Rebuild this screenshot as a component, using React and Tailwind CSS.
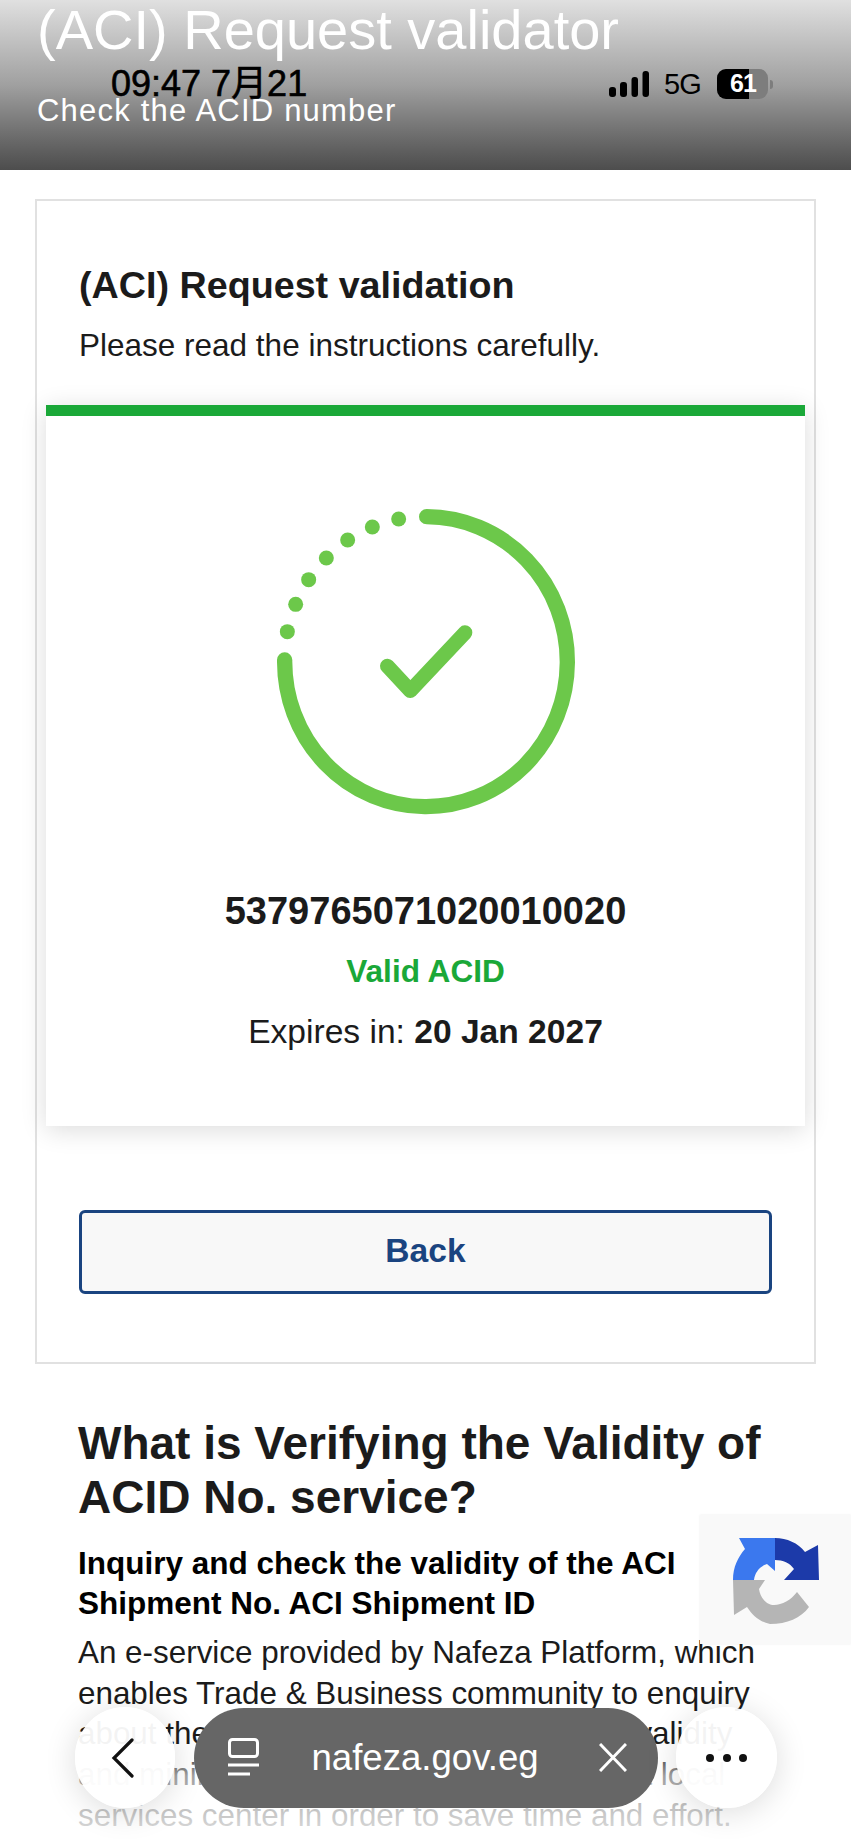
import React from "react";

const sans = { fontFamily: '"Liberation Sans", Arial, sans-serif' };

const dots = [
  [476, 117],
  [397, 141],
  [323, 180],
  [259, 234],
  [206, 299],
  [167, 373],
  [142, 455],
];

const SuccessRing = () => (
  <svg width="360" height="360" viewBox="0 0 1080 1080" fill="none" className="block">
    <path
      d="M560 110A424 435 0 1 1 134 540"
      stroke="#6cc84a"
      strokeWidth="46"
      strokeLinecap="round"
    />
    {dots.map(([cx, cy]) => (
      <circle key={cx} cx={cx} cy={cy} r="22.5" fill="#6cc84a" />
    ))}
    <path
      d="M442 558L511 632L675 458"
      stroke="#6cc84a"
      strokeWidth="44"
      strokeLinecap="round"
      strokeLinejoin="round"
    />
  </svg>
);

const RecaptchaLogo = () => (
  <svg width="86" height="87" viewBox="0 0 86 87" className="block">
    <path d="M0 43C0 30 5 20 12 12L6 1H42V34L34 27C27 29 22 35 21 43Z" fill="#3b78ee" />
    <path d="M42 1C54 1 65 6 72 15L85 8L86 43H51L61 32C57 26 50 23 42 23Z" fill="#1c3aa9" />
    <path d="M0 43H32L26 52C27 60 33 68 41 68C49 68 58 63 64 55L76 70C68 81 54 87 37 87C27 85 20 79 14 70L1 78Z" fill="#b5b5b5" />
  </svg>
);

const App = () => {
  return (
    <div style={sans} className="relative w-[851px] h-[1848px] overflow-hidden bg-white text-[#1b1b1b]">
      <header className="h-[170px] bg-gradient-to-b from-[#e0e0e0] via-[#a0a0a0] to-[#4d4d4d] pl-[37px] text-white">
        <h1 className="text-[56px] leading-[60px] whitespace-nowrap">(ACI) Request validator</h1>
        <p className="mt-[33px] text-[31px] leading-[36px] tracking-[1.2px] whitespace-nowrap">Check the ACID number</p>
      </header>

      <div className="absolute top-[62px] left-[111px] w-[662px] flex items-center text-black">
        <span
          className="text-[36px] leading-[44px] whitespace-nowrap [-webkit-text-stroke:0.6px_black]"
          style={{ fontFamily: '"Liberation Sans", "Noto Sans CJK SC", sans-serif' }}
        >
          09:47 7月21
        </span>
        <div className="ml-auto flex items-center">
          <svg width="40" height="44" viewBox="0 0 40 44" className="block">
            <rect x="0" y="25" width="7" height="10" rx="3" fill="#000" />
            <rect x="11" y="20" width="7" height="15" rx="3" fill="#000" />
            <rect x="22.5" y="15" width="6.5" height="20" rx="3" fill="#000" />
            <rect x="33.5" y="9" width="6.5" height="26" rx="3" fill="#000" />
          </svg>
          <span className="ml-[15px] w-[38px] text-[29px] leading-[44px] tracking-[-1px] whitespace-nowrap">5G</span>
          <div className="ml-[15px] relative w-[51px] h-[30px] rounded-[9px] bg-[#7d7d7d] overflow-hidden">
            <div className="w-[32px] h-full bg-black" />
            <span className="absolute left-[13px] top-0 h-full flex items-center text-[25px] font-bold tracking-[-1px] text-white">61</span>
          </div>
          <div className="ml-[2px] w-[3px] h-[9px] rounded-r-full bg-[#7d7d7d]" />
        </div>
      </div>

      <main className="pt-[29px] px-[35px]">
        <section className="border-2 border-[#e1e1e1] h-[1165px] pt-[62px]">
          <div className="px-[42px]">
            <h2 className="text-[37.7px] leading-[44px] font-bold whitespace-nowrap">(ACI) Request validation</h2>
            <p className="mt-[18px] text-[31.5px] leading-[40px] whitespace-nowrap">Please read the instructions carefully.</p>
          </div>

          <div className="mt-[40px] mx-[9px] h-[721px] border-t-[11px] border-[#1aa838] bg-white shadow-[0_4px_24px_rgba(0,0,0,0.14)] flex flex-col items-center">
            <div className="mt-[64px] mr-[11px]">
              <SuccessRing />
            </div>
            <p className="mt-[49px] text-[38px] leading-[44px] font-bold">5379765071020010020</p>
            <p className="mt-[16px] text-[31.6px] leading-[44px] font-bold text-[#1aa838]">Valid ACID</p>
            <p className="mt-[17px] text-[33.6px] leading-[44px]">
              Expires in: <b>20 Jan 2027</b>
            </p>
          </div>

          <div className="mt-[84px] mx-[42px]">
            <button className="w-full h-[84px] rounded-[6px] border-[3px] border-[#1a4480] bg-[#f8f8f8] pb-[2px] text-[33.6px] font-bold text-[#1a4480]">
              Back
            </button>
          </div>
        </section>

        <article className="mt-[52px] px-[43px]">
          <h2 className="text-[46px] leading-[54px] font-bold">What is Verifying the Validity of ACID No. service?</h2>
          <h3 className="mt-[19px] text-[31.5px] leading-[40px] font-bold text-black w-[640px]">
            Inquiry and check the validity of the ACI Shipment No. ACI Shipment ID
          </h3>
          <p className="mt-[10px] text-[31.4px] leading-[40.7px] whitespace-nowrap">
            An e-service provided by Nafeza Platform, which
            <br />
            enables Trade &amp; Business community to enquiry
            <br />
            about the ACI Shipment ID code and its validity
            <br />
            and minimize the need to visit the Nafeza local
            <br />
            services center in order to save time and effort.
          </p>
        </article>
      </main>

      <div className="absolute left-0 right-0 bottom-0 h-[103px] bg-gradient-to-b from-white/0 via-white/60 via-[30%] to-white/90" />

      <aside className="absolute left-[700px] top-[1515px] w-[151px] h-[129px] bg-[#f9f9f9] shadow-[0_0_2px_rgba(0,0,0,0.08)] pl-[33px] pt-[22px]">
        <RecaptchaLogo />
      </aside>

      <nav className="absolute left-[75px] top-[1707px] w-[702px] h-[101px] flex items-center justify-between">
        <button className="w-[100px] h-[101px] rounded-full bg-white/95 shadow-[0_4px_32px_rgba(0,0,0,0.14)] flex items-center justify-center">
          <svg className="mr-[6px]" width="23" height="40" viewBox="0 0 23 40" fill="none">
            <path d="M21 2L3 20L21 38" stroke="#111" strokeWidth="3.2" strokeLinecap="round" />
          </svg>
        </button>
        <div className="w-[464px] h-[100px] rounded-[50px] bg-[#666666] flex items-center pl-[34px] pr-[31px] text-white">
          <svg width="31" height="40" viewBox="0 0 31 40" fill="none" stroke="#fff" strokeWidth="3">
            <rect x="1.5" y="1.5" width="28" height="17" rx="3" />
            <path d="M0 27H31M0 36H22" />
          </svg>
          <span className="ml-[53px] text-[36.6px] leading-[44px] whitespace-nowrap">nafeza.gov.eg</span>
          <svg className="ml-auto" width="28" height="29" viewBox="0 0 28 29" fill="none" stroke="#fff" strokeWidth="3">
            <path d="M1 1L27 28M27 1L1 28" />
          </svg>
        </div>
        <button className="w-[101px] h-[101px] rounded-full bg-white/95 shadow-[0_4px_32px_rgba(0,0,0,0.14)] flex items-center justify-center gap-[8.5px]">
          <span className="w-[8px] h-[8px] rounded-full bg-[#111]" />
          <span className="w-[8px] h-[8px] rounded-full bg-[#111]" />
          <span className="w-[8px] h-[8px] rounded-full bg-[#111]" />
        </button>
      </nav>
    </div>
  );
};

export default App;
